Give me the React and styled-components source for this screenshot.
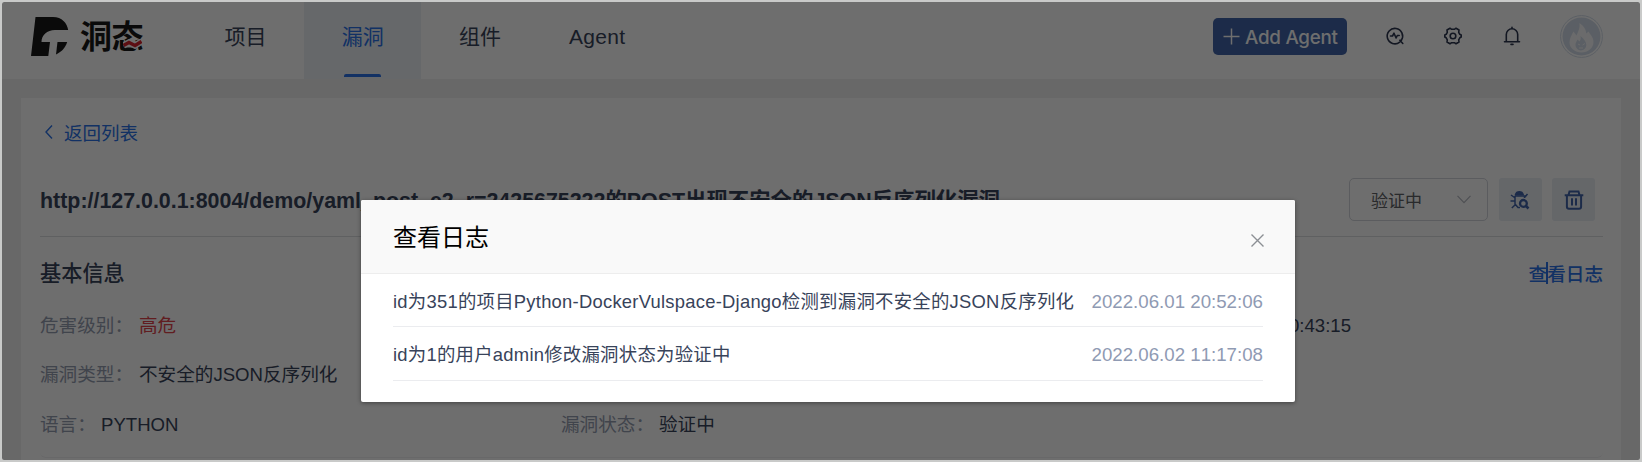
import React from 'react';
import styled, { createGlobalStyle } from 'styled-components';

const GlobalStyle = createGlobalStyle`
  * { box-sizing: border-box; }
  body {
    margin: 0;
    background: #c9cac9;
    font-family: "Liberation Sans", "Noto Sans CJK SC", sans-serif;
    -webkit-font-smoothing: antialiased;
  }
`;

const Window = styled.div`
  width: 1642px;
  height: 462px;
  padding: 2px;
  overflow: hidden;
`;

const Page = styled.div`
  position: relative;
  width: 1638px;
  height: 458px;
  overflow: hidden;
  border-radius: 2px;
  background: #f0f0f0;
  color: #38435a;
`;

const Header = styled.header`
  display: flex;
  align-items: stretch;
  height: 77px;
  background: #fff;
`;

const Brand = styled.div`
  display: flex;
  align-items: flex-start;
  width: 185px;
  padding: 15px 0 0 29px;
`;

const Wordmark = styled.div`
  position: relative;
  margin-left: 11px;
  height: 40px;
  font-size: 32px;
  line-height: 40px;
  font-weight: 700;
  letter-spacing: -0.5px;
  color: #181818;
  svg { position: absolute; left: 43px; top: 22px; }
`;

const Nav = styled.nav`
  display: flex;
  flex: 1;
`;

const NavItem = styled.a`
  display: flex;
  flex-direction: column;
  align-items: center;
  justify-content: space-between;
  width: 117.2px;
  padding: 20px 0 2px;
  font-size: 21px;
  line-height: 30px;
  letter-spacing: ${(p) => (p.$latin ? '0.3px' : '0')};
  color: ${(p) => (p.$active ? '#2a72e8' : '#38435a')};
  background: ${(p) => (p.$active ? '#edf1f5' : 'transparent')};
  &::after {
    content: '';
    width: 37px;
    height: 3px;
    border-radius: 2px 2px 0 0;
    background: ${(p) => (p.$active ? '#2a72e8' : 'transparent')};
  }
`;

const Tools = styled.div`
  display: flex;
  align-items: flex-start;
  padding: 13px 37px 0 0;
`;

const AddButton = styled.button`
  display: flex;
  align-items: center;
  gap: 5px;
  width: 134px;
  height: 37px;
  margin: 3px 36.5px 0 0;
  padding: 2px 0 0 10px;
  border: 0;
  border-radius: 5px;
  background: #4164a9;
  color: #fff;
  font: 500 18.8px Inter, "Liberation Sans", sans-serif;
  letter-spacing: -0.25px;
  white-space: nowrap;
  svg { margin-top: -2px; }
`;

const ToolIcon = styled.span`
  display: flex;
  width: 22px;
  height: 42px;
  align-items: center;
  justify-content: center;
  margin-right: 36.5px;
  &:last-of-type { margin-right: 37.5px; }
`;

const Card = styled.main`
  display: flex;
  flex-direction: column;
  height: 362px;
  margin: 19px 19px 0;
  padding: 19px 18px 0 19px;
  background: #fff;
`;

const Back = styled.a`
  display: flex;
  align-items: center;
  gap: 11.5px;
  height: 30px;
  padding-left: 4.5px;
  font-size: 18.5px;
  color: #2a72e8;
`;

const TitleRow = styled.div`
  display: flex;
  align-items: center;
  height: 90px;
  padding: 16px 8px 0 0;
  border-bottom: 1px solid #dcdee2;
`;

const Title = styled.h1`
  flex: 1;
  margin: -2px 0 0;
  font-size: 21.4px;
  font-weight: 700;
  white-space: nowrap;
`;

const Select = styled.div`
  display: flex;
  align-items: center;
  justify-content: space-between;
  width: 139px;
  height: 43px;
  padding: 0 16px 0 21px;
  border: 1px solid #d2d5dc;
  border-radius: 5px;
  font-size: 17px;
  color: #606266;
`;

const IconButton = styled.button`
  display: flex;
  align-items: center;
  justify-content: center;
  width: 43px;
  height: 43px;
  margin-left: 10.5px;
  padding: 0;
  border: 0;
  border-radius: 3px;
  background: #eaeef4;
`;

const SectionHead = styled.div`
  display: flex;
  align-items: center;
  justify-content: space-between;
  height: 64px;
  padding-top: 5px;
`;

const SectionTitle = styled.h2`
  margin: 0;
  font-size: 21.2px;
  font-weight: 500;
`;

const LogLink = styled.a`
  position: relative;
  margin-top: 1px;
  font-size: 18.6px;
  font-weight: 500;
  color: #2a72e8;
`;

const TextCaret = styled.i`
  position: absolute;
  left: 17px;
  top: 3px;
  width: 2px;
  height: 22px;
  background: #2a72e8;
`;

const InfoGrid = styled.div`
  display: grid;
  grid-template-columns: 521px 521px 1fr;
  grid-auto-rows: 49.5px;
  align-items: center;
  height: 157px;
  font-size: 18.6px;
  border-bottom: 1px solid #f0f1f3;
  border-radius: 0 0 6px 6px;
`;

const Field = styled.div`
  display: flex;
  align-items: baseline;
  width: ${(p) => (p.$alignEnd ? '269px' : 'auto')};
  justify-content: ${(p) => (p.$alignEnd ? 'flex-end' : 'flex-start')};
  line-height: 28px;
  white-space: nowrap;
`;

const Label = styled.span`
  width: ${(p) => p.$width}px;
  color: #959db0;
`;

const Value = styled.span`
  color: ${(p) => (p.$danger ? '#e0444c' : '#38435a')};
`;

const Overlay = styled.div`
  position: absolute;
  inset: 0;
  display: flex;
  justify-content: center;
  align-items: flex-start;
  padding: 198px 0 0 14px;
  background: rgba(0, 0, 0, 0.57);
`;

const Dialog = styled.section`
  width: 934px;
  height: 202px;
  border-radius: 2px;
  background: #fff;
  box-shadow: 0 1px 4px rgba(0, 0, 0, 0.4);
  overflow: hidden;
`;

const DialogHead = styled.div`
  display: flex;
  align-items: center;
  justify-content: space-between;
  height: 74px;
  padding: 0 31px 2px 32px;
  background: #f9f9f9;
  border-bottom: 1px solid #ededed;
  font-size: 24px;
  color: #000;
  svg { margin-top: 10px; }
`;

const LogList = styled.div`
  padding: 0 32px;
`;

const LogRow = styled.div`
  display: flex;
  align-items: baseline;
  justify-content: space-between;
  height: ${(p) => p.$height}px;
  padding-top: 14px;
  border-bottom: 1px solid #ebecef;
  font-size: 18.4px;
  line-height: 28px;
  letter-spacing: 0.25px;
  color: #38435a;
  white-space: nowrap;
  time { color: #8f9ab3; font-size: 18.7px; letter-spacing: 0; font-kerning: none; }
`;

const Mark = () => (
  <svg width="38" height="40" viewBox="0 0 38 40" fill="#181818">
    <path d="M4.5 0H22C31 0 36 6 37.2 13H24C16 13 10.5 18 10.5 25H19L17.3 39H0Z" />
    <path d="M26.5 25H36.2C34.5 30.5 31 34.5 25 37.5Z" />
  </svg>
);

const Wave = () => (
  <svg width="19" height="10" viewBox="0 0 19 10" fill="none">
    <path d="M.5 6.5 6 3.5 12 6.5 18.5 2.5" stroke="#fff" strokeWidth="6.5" />
    <path d="M.5 6.5 6 3.5 12 6.5 18.5 2.5" stroke="#d8242e" strokeWidth="3.4" />
  </svg>
);

const Plus = () => (
  <svg width="17" height="17" viewBox="0 0 17 17" stroke="#fff" strokeWidth="1.5">
    <path d="M8.5 .5v16M.5 8.5h16" />
  </svg>
);

const ink = { fill: 'none', stroke: '#2c3650', strokeWidth: 1.6, strokeLinejoin: 'round', strokeLinecap: 'round' };

const PulseIcon = () => (
  <svg width="20" height="20" viewBox="0 0 20 20" {...ink}>
    <path d="M14.7 16.1A7.7 7.7 0 1 1 16.4 14.2L14.8 14.3 17.8 17.5" />
    <path d="M5.5 10H7.5L9 7.2 11.1 12 12.3 9.5H14.2" />
  </svg>
);

const GearIcon = () => (
  <svg width="20" height="20" viewBox="0 0 20 20" {...ink}>
    <path d="M7 2.2 8.6 3.3H11.4L13 2.2 16 4 15.7 6.3 16.8 8.3 18.2 9V11L16.8 11.8 15.7 13.8 16 16 13 17.8 11.4 16.7H8.6L7 17.8 4 16 4.3 13.8 3.2 11.8 1.8 11V9L3.2 8.3 4.3 6.3 4 4Z" />
    <circle cx="10" cy="10" r="2.8" />
  </svg>
);

const BellIcon = () => (
  <svg width="20" height="20" viewBox="0 0 20 20" {...ink}>
    <path d="M4.3 15.8V8.5A5.7 5.7 0 0 1 15.7 8.5V15.8M2.5 15.8H17.5M10 1.2V2.7M9 18.4H11" />
  </svg>
);

const Avatar = () => (
  <svg width="43" height="43" viewBox="0 0 43 43">
    <circle cx="21.5" cy="21.5" r="20.9" fill="none" stroke="#d3dce9" strokeWidth="1" />
    <circle cx="21.5" cy="21.5" r="19" fill="#d3dce9" />
    <path d="M19.5 8C25 12 26 15 26.2 18.5L28.5 16.5C30.5 20 33.5 22 33.5 27C33.5 33 28 37.5 21.5 37.5C15 37.5 9.5 33 9.5 27.5C9.5 23 12 19.5 13.5 16.5L16.5 20.5C18.5 16 20 13 19.5 8Z" fill="#f7f8fa" />
    <path d="M20.5 21C24 24 26.3 27 26.3 30A5.4 5.4 0 0 1 15.5 30C15.5 27.5 16.8 26 17.5 24.5L19.5 26.5C20.7 25 21 23 20.5 21Z" fill="#d3dce9" />
    <path d="M18 29 20 30M25 28.5 22.5 30M19 33H23" stroke="#f7f8fa" strokeWidth="1" />
  </svg>
);

const BugSearchIcon = () => (
  <svg width="20" height="20" viewBox="0 0 20 20" fill="none" stroke="#4164a9" strokeWidth="1.5">
    <path d="M5.5 4.7A4 4 0 0 1 13.2 4.7Z" fill="#4164a9" />
    <path d="M5 6H14.5V8M5 6V14L8 17.5H10M1 5 4.5 7.5M17.5 4 15 7M.5 11H4.8M1.8 18 5.5 14.5" />
    <circle cx="13.4" cy="13.4" r="3.4" strokeWidth="2.3" />
    <path d="M15.5 15.5 18.5 18.5" strokeWidth="2.5" />
  </svg>
);

const TrashIcon = () => (
  <svg width="20" height="20" viewBox="0 0 20 20" fill="none" stroke="#4164a9" strokeWidth="2">
    <path d="M.7 5.3H19.3M4.5 5 5.5 1.5H14.5L15.5 5M2.9 5.5V16.5Q2.9 18.7 5 18.7H15Q17.1 18.7 17.1 16.5V5.5" />
    <path d="M8 8.3V15.5M12 8.3V15.5" />
  </svg>
);

const ChevronLeft = () => (
  <svg width="8" height="14" viewBox="0 0 8 14" fill="none" stroke="#2a72e8" strokeWidth="1.4">
    <path d="M7 .5 1 7 7 13.5" />
  </svg>
);

const ChevronDown = () => (
  <svg width="14" height="9" viewBox="0 0 14 9" fill="none" stroke="#b6bac2" strokeWidth="1.2">
    <path d="M.5 .8 7 7.6 13.5 .8" />
  </svg>
);

const CloseIcon = () => (
  <svg width="13" height="13" viewBox="0 0 13 13" stroke="#8c8f94" strokeWidth="1.4">
    <path d="M.5 .5 12.5 12.5M12.5 .5 .5 12.5" />
  </svg>
);

const navItems = ['项目', '漏洞', '组件', 'Agent'];

const logs = [
  { text: 'id为351的项目Python-DockerVulspace-Django检测到漏洞不安全的JSON反序列化', time: '2022.06.01 20:52:06', height: 53 },
  { text: 'id为1的用户admin修改漏洞状态为验证中', time: '2022.06.02 11:17:08', height: 54 },
];

export default function App() {
  return (
    <Window>
      <GlobalStyle />
      <Page>
        <Header>
          <Brand>
            <Mark />
            <Wordmark>洞态<Wave /></Wordmark>
          </Brand>
          <Nav>
            {navItems.map((item) => (
              <NavItem key={item} $active={item === '漏洞'} $latin={item === 'Agent'}>{item}</NavItem>
            ))}
          </Nav>
          <Tools>
            <AddButton><Plus />Add Agent</AddButton>
            <ToolIcon><PulseIcon /></ToolIcon>
            <ToolIcon><GearIcon /></ToolIcon>
            <ToolIcon><BellIcon /></ToolIcon>
            <Avatar />
          </Tools>
        </Header>
        <Card>
          <Back><ChevronLeft />返回列表</Back>
          <TitleRow>
            <Title>http://127.0.0.1:8004/demo/yaml_post_e2_r=2425675222的POST出现不安全的JSON反序列化漏洞</Title>
            <Select>验证中<ChevronDown /></Select>
            <IconButton><BugSearchIcon /></IconButton>
            <IconButton><TrashIcon /></IconButton>
          </TitleRow>
          <SectionHead>
            <SectionTitle>基本信息</SectionTitle>
            <LogLink>查看日志<TextCaret /></LogLink>
          </SectionHead>
          <InfoGrid>
            <Field><Label $width={99}>危害级别：</Label><Value $danger>高危</Value></Field>
            <Field />
            <Field $alignEnd><Value>20:43:15</Value></Field>
            <Field><Label $width={99}>漏洞类型：</Label><Value>不安全的JSON反序列化</Value></Field>
            <Field />
            <Field />
            <Field><Label $width={61}>语言：</Label><Value>PYTHON</Value></Field>
            <Field><Label $width={98}>漏洞状态：</Label><Value>验证中</Value></Field>
          </InfoGrid>
        </Card>
        <Overlay>
          <Dialog>
            <DialogHead>查看日志<CloseIcon /></DialogHead>
            <LogList>
              {logs.map((log) => (
                <LogRow key={log.time} $height={log.height}>
                  <span>{log.text}</span>
                  <time>{log.time}</time>
                </LogRow>
              ))}
            </LogList>
          </Dialog>
        </Overlay>
      </Page>
    </Window>
  );
}
